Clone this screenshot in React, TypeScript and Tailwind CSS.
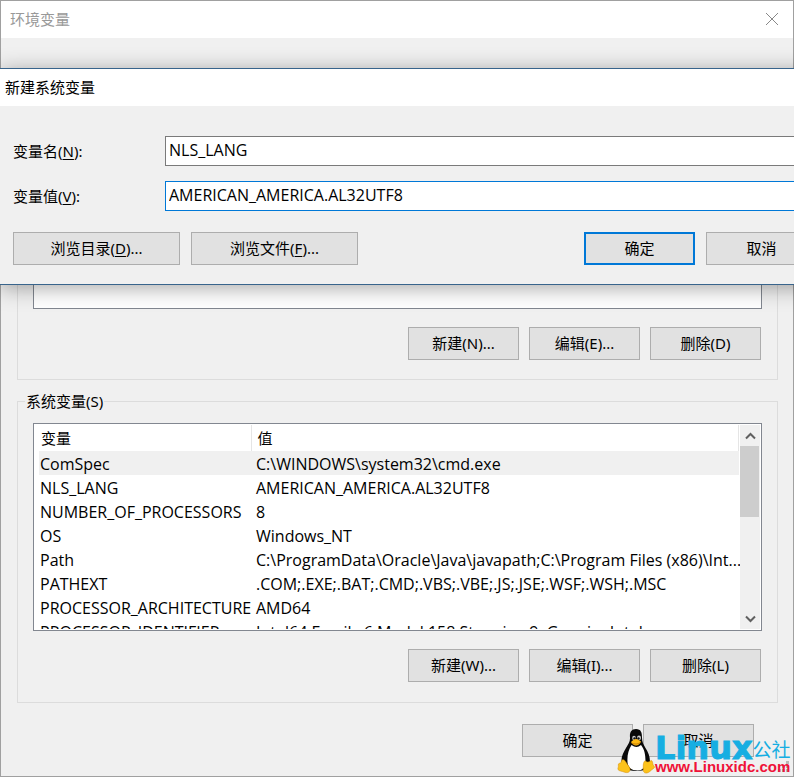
import type { ReactNode } from "react";

const systemVariables = [
  { name: "ComSpec", value: "C:\\WINDOWS\\system32\\cmd.exe" },
  { name: "NLS_LANG", value: "AMERICAN_AMERICA.AL32UTF8" },
  { name: "NUMBER_OF_PROCESSORS", value: "8" },
  { name: "OS", value: "Windows_NT" },
  {
    name: "Path",
    value: "C:\\ProgramData\\Oracle\\Java\\javapath;C:\\Program Files (x86)\\Int...",
  },
  { name: "PATHEXT", value: ".COM;.EXE;.BAT;.CMD;.VBS;.VBE;.JS;.JSE;.WSF;.WSH;.MSC" },
  { name: "PROCESSOR_ARCHITECTURE", value: "AMD64" },
  { name: "PROCESSOR_IDENTIFIER", value: "Intel64 Family 6 Model 158 Stepping 9, GenuineIntel" },
];

function PushButton({
  children,
  wide = false,
  primary = false,
}: {
  children: ReactNode;
  wide?: boolean;
  primary?: boolean;
}) {
  return (
    <button
      type="button"
      className={`h-[33px] shrink-0 bg-[#e1e1e1] pb-0.5 text-center ${wide ? "w-[167px]" : "w-[111px]"} ${
        primary ? "border-2 border-[#0078d7]" : "border border-[#adadad]"
      }`}
    >
      {children}
    </button>
  );
}

function ScrollBar() {
  return (
    <div className="flex w-5 shrink-0 flex-col bg-[#f0f0f0]">
      <button type="button" aria-label="Scroll up" className="flex h-[21px] items-center justify-center">
        <svg width="11" height="8" viewBox="0 0 11 8" fill="none" stroke="#606060" strokeWidth="2">
          <path d="M1 6.5 5.5 2 10 6.5" />
        </svg>
      </button>
      <div className="mr-px h-[71px] bg-[#cdcdcd]" />
      <div className="flex-1" />
      <button type="button" aria-label="Scroll down" className="flex h-[21px] items-center justify-center">
        <svg width="11" height="8" viewBox="0 0 11 8" fill="none" stroke="#606060" strokeWidth="2">
          <path d="M1 1.500 5.500 6 10 1.500" />
        </svg>
      </button>
    </div>
  );
}

function VariableTable() {
  return (
    <div className="flex h-[208px] overflow-hidden border border-[#828790] bg-white py-px pr-px">
      <div className="min-w-0 flex-1 overflow-hidden pl-[5px] pr-px">
        <table className="w-full table-fixed border-collapse text-left leading-6 whitespace-nowrap">
          <thead>
            <tr className="h-[26px]">
              <th className="w-[212px] border-r border-[#e5e5e5] p-0 pl-0.5 font-normal">变量</th>
              <th className="border-r border-[#e5e5e5] p-0 pl-1.5 font-normal">值</th>
            </tr>
          </thead>
          <tbody className="font-['Open_Sans'] text-base leading-[22px]">
            {systemVariables.map((item, index) => (
              <tr key={item.name} className={index === 0 ? "h-6 bg-[#f0f0f0]" : "h-6"}>
                <td className="p-0 pt-0.5 pl-px">{item.name}</td>
                <td className="p-0 pt-0.5 pl-[5px]">{item.value}</td>
              </tr>
            ))}
          </tbody>
        </table>
      </div>
      <ScrollBar />
    </div>
  );
}

function NewVariableDialog() {
  return (
    <div
      role="dialog"
      aria-labelledby="new-variable-title"
      className="absolute top-[68px] -right-9 left-0 border-y border-[#38648c] bg-[#f0f0f0] shadow-[0_3px_20px_rgba(0,0,0,0.35)]"
    >
      <h2 id="new-variable-title" className="h-[37px] bg-white pl-[5px] leading-9">
        新建系统变量
      </h2>
      <div className="px-[13px] pt-[30px] pb-[19px]">
        <div className="flex flex-col gap-[15px]">
          <div className="flex items-center">
            <label htmlFor="variable-name" className="w-[152px] shrink-0">
              变量名(<u className="underline-offset-2">N</u>):
            </label>
            <input
              id="variable-name"
              defaultValue="NLS_LANG"
              className="h-[30px] min-w-0 flex-1 border border-[#7a7a7a] bg-white pb-0.5 pl-[3px] font-['Open_Sans'] text-base outline-none"
            />
          </div>
          <div className="flex items-center">
            <label htmlFor="variable-value" className="w-[152px] shrink-0">
              变量值(<u className="underline-offset-2">V</u>):
            </label>
            <input
              id="variable-value"
              defaultValue="AMERICAN_AMERICA.AL32UTF8"
              className="h-[30px] min-w-0 flex-1 border border-[#0078d7] bg-white pb-0.5 pl-[3px] font-['Open_Sans'] text-base outline-none"
            />
          </div>
        </div>
        <div className="mt-[21px] flex gap-[11px]">
          <PushButton wide>
            浏览目录(<u className="underline-offset-2">D</u>)...
          </PushButton>
          <PushButton wide>
            浏览文件(<u className="underline-offset-2">F</u>)...
          </PushButton>
          <div className="flex-1" />
          <PushButton primary>确定</PushButton>
          <PushButton>取消</PushButton>
        </div>
      </div>
    </div>
  );
}

function Penguin() {
  return (
    <svg width="38" height="46" viewBox="0 0 38 46">
      <path
        d="M19 1c-5 0-6.500 4-6 8.500.3 4-1.500 6.500-4 10.500-2.500 4-5 9-4.500 14 .4 5 5 9 14.500 9s14-3 14-9-2-10-4.500-14c-2-3.500-3.500-6-3.500-10.500C25 4.500 24 1 19 1z"
        fill="#090909"
      />
      <path
        d="M14.500 17c-3 5-4.500 10-4 17 .2 5 4 8.500 10 8.500 5 0 8-3 8-9 0-7-1-12-4.500-16.500-3 2.500-6 2.500-9.500 0z"
        fill="#fff"
      />
      <ellipse cx="17" cy="10" rx="1.800" ry="2.300" fill="#ccc" />
      <ellipse cx="22" cy="10" rx="2" ry="2.400" fill="#ccc" />
      <circle cx="17.500" cy="10.500" r="1.200" fill="#111" />
      <circle cx="21.500" cy="10.500" r="1.200" fill="#111" />
      <path d="M14 14c2-2 3.500-3 5-3s3.500 1.500 5 2.500c-1 2.500-3 4-5 4s-4-1.500-5-3.500z" fill="#fdb913" />
      <path d="M14.500 15c3 1.500 6 1.500 9-.5" fill="none" stroke="#b46b00" strokeWidth=".7" />
      <path
        d="M5 32c2-1 3 .5 4.500 3 1.500 2.500 4 4.500 3.500 7-.5 3-3.500 3-6 2-2-.8-5-.8-6-2.500-.6-1 .8-2.500.3-4.500-.3-2 2-1.500 2.700-2.500.5-.8.300-2 1-2.500z"
        fill="#fcc21b"
        stroke="#d58a00"
        strokeWidth=".5"
      />
      <path
        d="M27 34c1-2.500 2 0 4 0s3-2.500 4-1 .5 3 1.500 4.500c1 1 1.500 2 0 3-2.500 1.500-4 4-6.500 4.500-3 .5-4-1.500-3.800-4.500.1-2.500-.2-4.500.8-6.500z"
        fill="#fcc21b"
        stroke="#d58a00"
        strokeWidth=".5"
      />
    </svg>
  );
}

function Watermark() {
  return (
    <div className="pointer-events-none absolute right-[5px] bottom-[3px] flex items-end whitespace-nowrap">
      <Penguin />
      <div className="flex w-[134px] flex-col">
        <div className="flex items-end">
          <span className="font-['DejaVu_Sans'] text-[32px] leading-6 font-bold text-[#16aee2] [-webkit-text-stroke:1px_#16aee2]">
            Linux
          </span>
          <span className="text-[19px] leading-5 text-[#16aee2]">公社</span>
        </div>
        <span className="font-['Liberation_Sans'] text-[15px] leading-[14px] font-bold text-[#ef1238]">
          www.Linuxidc.com
        </span>
      </div>
    </div>
  );
}

function SizeGrip() {
  return (
    <svg className="absolute right-[5px] bottom-[5px]" width="11" height="11" viewBox="0 0 11 11" fill="#b8b8b8">
      <path d="M8 0h3v3H8zM8 4h3v3H8zM8 8h3v3H8zM4 4h3v3H4zM4 8h3v3H4zM0 8h3v3H0z" />
    </svg>
  );
}

export default function App() {
  return (
    <div className="relative overflow-hidden font-['Noto_Sans','Noto_Sans_CJK_SC',sans-serif] text-[15px] leading-5 text-black">
      <div className="min-h-screen border border-[#a0a0a0] bg-[#f0f0f0]">
        <header className="flex h-[37px] items-center justify-between bg-white pr-[14px] pb-0.5 pl-[9px]">
          <h1 className="text-[#999999]">环境变量</h1>
          <button type="button" aria-label="关闭">
            <svg width="14" height="14" viewBox="0 0 14 14" fill="none" stroke="#888888">
              <path d="m1 1 12 12M13 1 1 13" />
            </svg>
          </button>
        </header>

        <main className="pt-[42px] pr-[15px] pb-[19px] pl-4">
          <section className="border border-[#dcdcdc] px-[15px] pt-5 pb-[19px]">
            <div className="h-[208px] border border-[#828790] bg-white" />
            <div className="mt-[18px] flex justify-end gap-2.5 pr-px">
              <PushButton>新建(N)...</PushButton>
              <PushButton>编辑(E)...</PushButton>
              <PushButton>删除(D)</PushButton>
            </div>
          </section>

          <fieldset className="mt-[11px] min-w-0 border border-[#dcdcdc] px-[15px] pt-3 pb-5">
            <legend className="-ml-2 px-px leading-5">系统变量(S)</legend>
            <VariableTable />
            <div className="mt-[18px] flex justify-end gap-2.5 pr-px">
              <PushButton>新建(W)...</PushButton>
              <PushButton>编辑(I)...</PushButton>
              <PushButton>删除(L)</PushButton>
            </div>
          </fieldset>

          <div className="mt-[21px] flex justify-end gap-2.5 pr-6">
            <PushButton>确定</PushButton>
            <PushButton>取消</PushButton>
          </div>
        </main>
      </div>

      <SizeGrip />
      <Watermark />
      <NewVariableDialog />
    </div>
  );
}
